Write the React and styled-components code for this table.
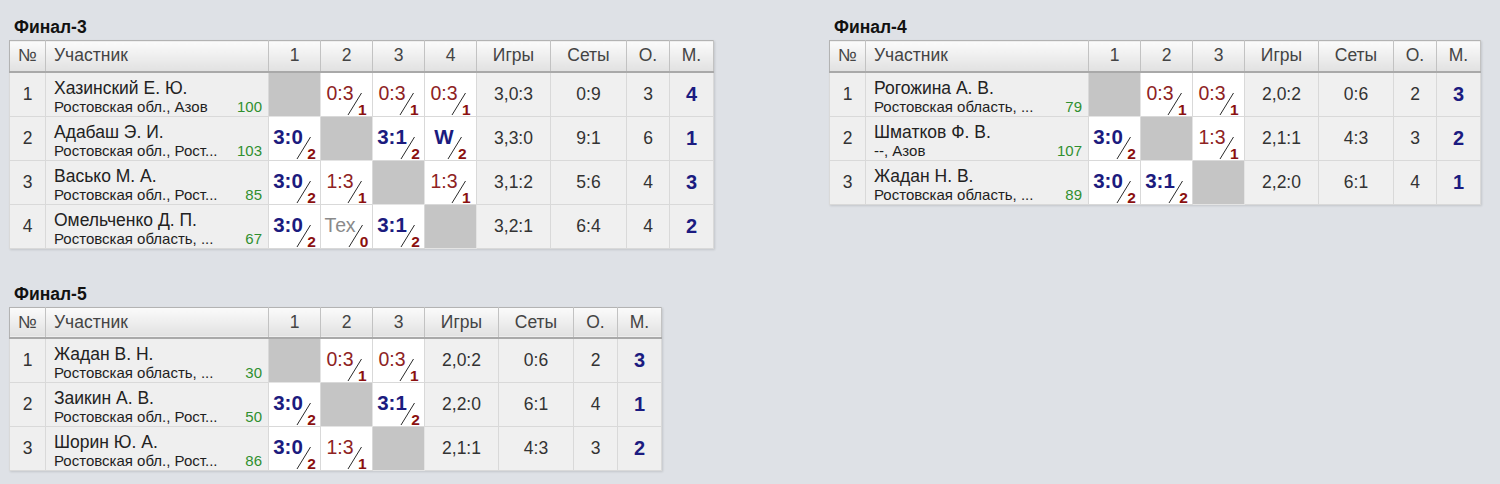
import React from "react";
import styled, { createGlobalStyle } from "styled-components";

const Global = createGlobalStyle`
  html, body { margin: 0; padding: 0; background: #dee1e6; }
  body { font-family: "Liberation Sans", Arial, sans-serif; color: #222; }
`;

const Page = styled.div`
  display: grid;
  grid-template-columns: 820px auto;
  row-gap: 35px;
  padding: 17px 9px;
  align-items: start;
`;

const Section = styled.section`
  display: flex;
  flex-direction: column;
`;

const Title = styled.div`
  font-weight: bold;
  font-size: 17.5px;
  line-height: 20px;
  padding-left: 5px;
  margin-bottom: 3px;
  color: #111;
`;

const Table = styled.table`
  border-collapse: collapse;
  table-layout: fixed;
  width: ${(p) => p.$width}px;
  border: 1px solid #b3b3b3;
  box-shadow: 1px 1px 2px rgba(0, 0, 0, 0.12);
`;

const HeadCell = styled.th`
  box-sizing: border-box;
  height: 31px;
  padding: 0;
  font-weight: normal;
  font-size: 17.5px;
  color: #444;
  text-align: ${(p) => (p.$left ? "left" : "center")};
  padding-left: ${(p) => (p.$left ? "8px" : "0")};
  background: linear-gradient(#fbfbfb, #e1e1e1);
  border-right: 1px solid #c2c2c2;
  border-bottom: 2px solid #a9a9a9;
`;

const BodyCell = styled.td`
  box-sizing: border-box;
  height: 44px;
  padding: 0;
  border: 1px solid #d9d9d9;
  background: #efefef;
  text-align: center;
  vertical-align: middle;
  font-size: 17.5px;
  color: #333;
`;

const NumCell = styled(BodyCell)``;

const NameCell = styled(BodyCell)`
  text-align: left;
  vertical-align: top;
  padding: 5px 6px 0 8px;
`;

const Name = styled.div`
  font-size: 17.5px;
  line-height: 20px;
  color: #222;
  white-space: nowrap;
`;

const SubLine = styled.div`
  display: flex;
  justify-content: space-between;
  font-size: 15px;
  line-height: 17px;
  white-space: nowrap;
`;

const Region = styled.span`
  color: #1e1e1e;
`;

const Rating = styled.span`
  color: #2f8f2f;
`;

const ScoreCell = styled(BodyCell)`
  background: #fff;
  vertical-align: top;
  padding-top: 10px;
  line-height: 0;
`;

const SelfCell = styled(BodyCell)`
  background: #c5c5c5;
  border-color: #e4e4e4;
`;

const ScoreBox = styled.div`
  position: relative;
  display: inline-block;
  vertical-align: top;
  padding: 0 13px 13px 0;
  text-align: left;
`;

const Score = styled.span`
  display: block;
  font-size: ${(p) => (p.$kind === "win" ? "20.5px" : "19.5px")};
  font-weight: ${(p) => (p.$kind === "win" ? "bold" : "normal")};
  line-height: 20px;
  color: ${(p) =>
    p.$kind === "win" ? "#1b1b7e" : p.$kind === "tech" ? "#8a8a8a" : "#8e2323"};
`;

const Mark = styled.div`
  position: absolute;
  right: 0;
  bottom: 0;
  width: 21px;
  height: 25px;
`;

const Slash = styled.svg`
  position: absolute;
  left: 0;
  top: 0;
`;

const Points = styled.span`
  position: absolute;
  right: 0;
  bottom: -1px;
  font-size: 15.5px;
  line-height: 15px;
  font-weight: bold;
  color: #8b1010;
`;

const StatCell = styled(BodyCell)`
  background: #f0f0f0;
`;

const PlaceCell = styled(BodyCell)`
  font-size: 20px;
  font-weight: bold;
  color: #1b1b80;
`;

const finals = [
  {
    title: "Финал-3",
    width: 704,
    cols: [36, 223, 52, 52, 52, 52, 74, 76, 43, 44],
    rows: [
      ["1", "Хазинский Е. Ю.", "Ростовская обл., Азов", "100", [null, ["loss", "0:3", "1"], ["loss", "0:3", "1"], ["loss", "0:3", "1"]], "3,0:3", "0:9", "3", "4"],
      ["2", "Адабаш Э. И.", "Ростовская обл., Рост...", "103", [["win", "3:0", "2"], null, ["win", "3:1", "2"], ["win", "W", "2"]], "3,3:0", "9:1", "6", "1"],
      ["3", "Васько М. А.", "Ростовская обл., Рост...", "85", [["win", "3:0", "2"], ["loss", "1:3", "1"], null, ["loss", "1:3", "1"]], "3,1:2", "5:6", "4", "3"],
      ["4", "Омельченко Д. П.", "Ростовская область, ...", "67", [["win", "3:0", "2"], ["tech", "Тех", "0"], ["win", "3:1", "2"], null], "3,2:1", "6:4", "4", "2"],
    ],
  },
  {
    title: "Финал-4",
    width: 651,
    cols: [36, 223, 52, 52, 52, 74, 75, 43, 44],
    rows: [
      ["1", "Рогожина А. В.", "Ростовская область, ...", "79", [null, ["loss", "0:3", "1"], ["loss", "0:3", "1"]], "2,0:2", "0:6", "2", "3"],
      ["2", "Шматков Ф. В.", "--, Азов", "107", [["win", "3:0", "2"], null, ["loss", "1:3", "1"]], "2,1:1", "4:3", "3", "2"],
      ["3", "Жадан Н. В.", "Ростовская область, ...", "89", [["win", "3:0", "2"], ["win", "3:1", "2"], null], "2,2:0", "6:1", "4", "1"],
    ],
  },
  {
    title: "Финал-5",
    width: 652,
    cols: [36, 223, 52, 52, 52, 74, 75, 44, 44],
    rows: [
      ["1", "Жадан В. Н.", "Ростовская область, ...", "30", [null, ["loss", "0:3", "1"], ["loss", "0:3", "1"]], "2,0:2", "0:6", "2", "3"],
      ["2", "Заикин А. В.", "Ростовская обл., Рост...", "50", [["win", "3:0", "2"], null, ["win", "3:1", "2"]], "2,2:0", "6:1", "4", "1"],
      ["3", "Шорин Ю. А.", "Ростовская обл., Рост...", "86", [["win", "3:0", "2"], ["loss", "1:3", "1"], null], "2,1:1", "4:3", "3", "2"],
    ],
  },
];

function Result({ r }) {
  if (!r) return <SelfCell />;
  const [kind, text, pts] = r;
  return (
    <ScoreCell>
      <ScoreBox>
        <Score $kind={kind}>{text}</Score>
        <Mark>
          <Slash width="21" height="25" viewBox="0 0 21 25">
            <line x1="2" y1="24" x2="15.5" y2="2" stroke="#2a2a2a" strokeWidth="1" />
          </Slash>
          <Points>{pts}</Points>
        </Mark>
      </ScoreBox>
    </ScoreCell>
  );
}

function Group({ data }) {
  const n = data.rows.length;
  return (
    <Section>
      <Title>{data.title}</Title>
      <Table $width={data.width}>
        <colgroup>
          {data.cols.map((w, i) => (
            <col key={i} style={{ width: w }} />
          ))}
        </colgroup>
        <thead>
          <tr>
            <HeadCell>№</HeadCell>
            <HeadCell $left>Участник</HeadCell>
            {Array.from({ length: n }, (_, i) => (
              <HeadCell key={i}>{i + 1}</HeadCell>
            ))}
            <HeadCell>Игры</HeadCell>
            <HeadCell>Сеты</HeadCell>
            <HeadCell>О.</HeadCell>
            <HeadCell>М.</HeadCell>
          </tr>
        </thead>
        <tbody>
          {data.rows.map((row) => (
            <tr key={row[0]}>
              <NumCell>{row[0]}</NumCell>
              <NameCell>
                <Name>{row[1]}</Name>
                <SubLine>
                  <Region>{row[2]}</Region>
                  <Rating>{row[3]}</Rating>
                </SubLine>
              </NameCell>
              {row[4].map((r, i) => (
                <Result key={i} r={r} />
              ))}
              <StatCell>{row[5]}</StatCell>
              <StatCell>{row[6]}</StatCell>
              <StatCell>{row[7]}</StatCell>
              <PlaceCell>{row[8]}</PlaceCell>
            </tr>
          ))}
        </tbody>
      </Table>
    </Section>
  );
}

export default function App() {
  return (
    <>
      <Global />
      <Page>
        {finals.map((f) => (
          <Group key={f.title} data={f} />
        ))}
      </Page>
    </>
  );
}
